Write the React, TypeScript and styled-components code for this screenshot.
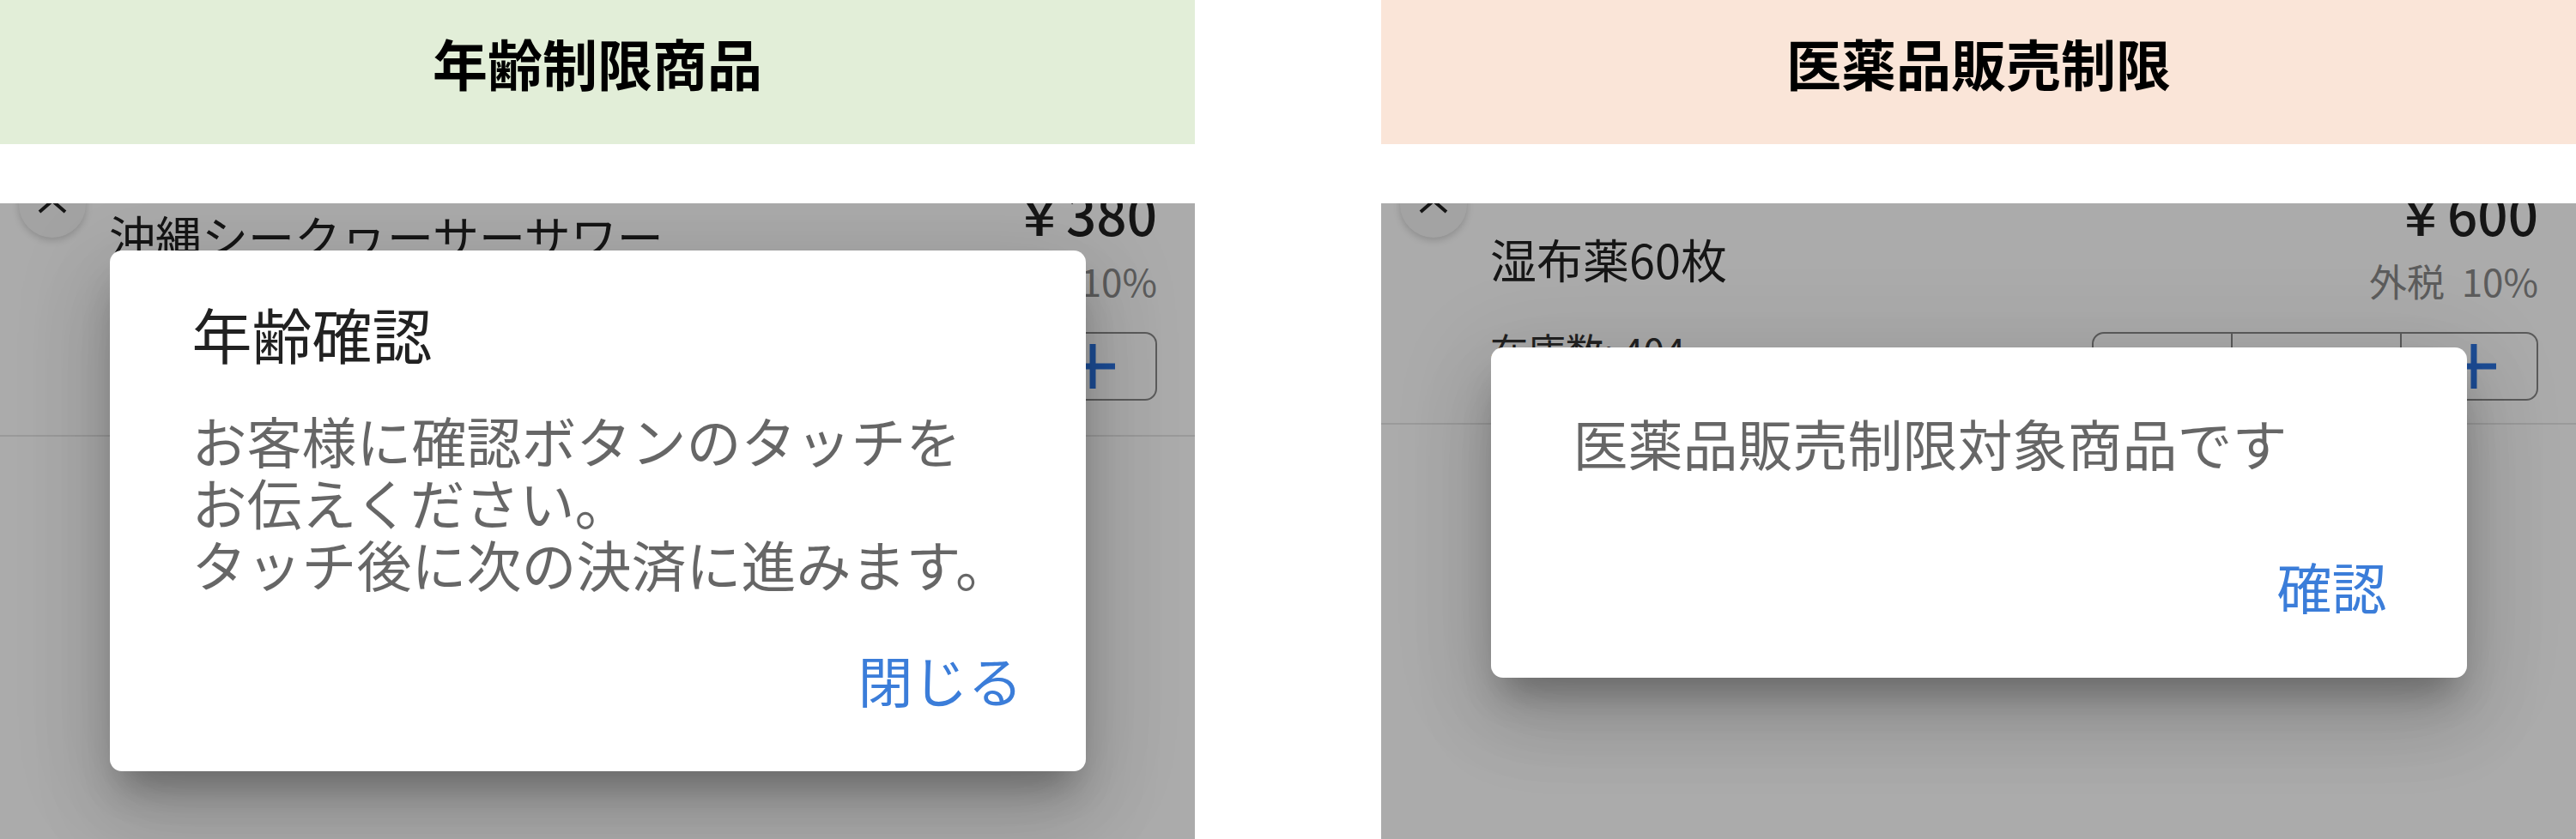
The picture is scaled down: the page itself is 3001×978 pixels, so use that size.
import styled, { createGlobalStyle } from "styled-components";

const GlobalStyle = createGlobalStyle`
  html, body {
    margin: 0;
    padding: 0;
    background: #fff;
  }
  body {
    font-family: "Noto Sans CJK JP", "Noto Sans", sans-serif;
  }
`;

type Case = {
  heading: string;
  tone: string;
  name: string[];
  nameTop: number;
  price: string;
  stock: string;
  dialogTop: number;
  title?: string;
  body: string[];
  bodyTop: number;
  bodyBottom: number;
  action: string;
};

const cases: Case[] = [
  {
    heading: "年齢制限商品",
    tone: "#e2eed8",
    name: ["沖縄シークヮーサーサワー", "350ml"],
    nameTop: 31,
    price: "￥380",
    stock: "在庫数: 120",
    dialogTop: 55,
    title: "年齢確認",
    body: ["お客様に確認ボタンのタッチを", "お伝えください。", "タッチ後に次の決済に進みます。"],
    bodyTop: 45,
    bodyBottom: 63,
    action: "閉じる",
  },
  {
    heading: "医薬品販売制限",
    tone: "#fae5d8",
    name: ["湿布薬60枚"],
    nameTop: 58,
    price: "￥600",
    stock: "在庫数: 404",
    dialogTop: 168,
    body: ["医薬品販売制限対象商品です"],
    bodyTop: 74,
    bodyBottom: 95,
    action: "確認",
  },
];

const App = () => {
  return (
    <>
      <GlobalStyle />
      <Page>
        {cases.map((c) => (
          <Column key={c.heading}>
            <Header $tone={c.tone}>{c.heading}</Header>
            <Screen>
              <List>
                <Row>
                  <Info $top={c.nameTop}>
                    <Name>
                      {c.name.map((line) => (
                        <div key={line}>{line}</div>
                      ))}
                    </Name>
                    <Stock>{c.stock}</Stock>
                  </Info>
                  <Side>
                    <Price>{c.price}</Price>
                    <Tax>外税&nbsp;&nbsp;10%</Tax>
                    <Stepper>
                      <Cell>−</Cell>
                      <Cell>1</Cell>
                      <Cell $shift={10}>
                        <svg width="56" height="56" viewBox="0 0 56 56">
                          <path d="M28 2v52M2 28h52" stroke="#2c74e0" strokeWidth="7" />
                        </svg>
                      </Cell>
                    </Stepper>
                  </Side>
                </Row>
              </List>
              <CollapseButton>
                <svg width="36" height="20" viewBox="0 0 36 20">
                  <path d="M3 17L18 4l15 13" fill="none" stroke="#222" strokeWidth="4" />
                </svg>
              </CollapseButton>
              <Scrim $top={c.dialogTop}>
                <Dialog>
                  {c.title && <Title>{c.title}</Title>}
                  <Body $top={c.bodyTop} $bottom={c.bodyBottom}>
                    {c.body.map((line) => (
                      <div key={line}>{line}</div>
                    ))}
                  </Body>
                  <Actions>
                    <ActionButton>{c.action}</ActionButton>
                  </Actions>
                </Dialog>
              </Scrim>
            </Screen>
          </Column>
        ))}
      </Page>
    </>
  );
};

const Page = styled.div`
  width: 3001px;
  height: 978px;
  display: grid;
  grid-template-columns: 1392px 1392px;
  column-gap: 217px;
  overflow: hidden;
`;

const Column = styled.div`
  display: flex;
  flex-direction: column;
  row-gap: 69px;
  height: 978px;
`;

const Header = styled.div<{ $tone: string }>`
  box-sizing: border-box;
  height: 168px;
  padding-top: 40px;
  background: ${(p) => p.$tone};
  text-align: center;
  font-size: 64px;
  line-height: 64px;
  font-weight: 700;
  color: #000;
`;

const Screen = styled.div`
  position: relative;
  flex: 1;
  overflow: hidden;
  background: #fff;
`;

const List = styled.div`
  margin-top: -40px;
`;

const Row = styled.div`
  display: flex;
  justify-content: space-between;
  padding: 11px 44px 26px 127px;
  border-bottom: 2px solid #e6e6e6;
`;

const Info = styled.div<{ $top: number }>`
  display: flex;
  flex-direction: column;
  row-gap: 42px;
  padding-top: ${(p) => p.$top}px;
`;

const Name = styled.div`
  font-size: 54px;
  line-height: 72px;
  color: #222;
`;

const Stock = styled.div`
  font-size: 44px;
  line-height: 56px;
  color: #333;
`;

const Side = styled.div`
  display: flex;
  flex-direction: column;
  align-items: flex-end;
`;

const Price = styled.div`
  font-size: 62px;
  line-height: 80px;
  font-weight: 500;
  color: #222;
`;

const Tax = styled.div`
  margin-top: 11px;
  font-size: 44px;
  line-height: 56px;
  color: #8a8a8a;
`;

const Stepper = styled.div`
  box-sizing: border-box;
  margin-top: 32px;
  width: 520px;
  height: 80px;
  display: grid;
  grid-template-columns: 160px 197px 1fr;
  border: 2px solid #888;
  border-radius: 14px;
`;

const Cell = styled.div<{ $shift?: number }>`
  display: flex;
  align-items: center;
  justify-content: center;
  padding-left: ${(p) => p.$shift ?? 0}px;
  font-size: 52px;
  color: #333;
  & + & {
    border-left: 2px solid #888;
  }
`;

const CollapseButton = styled.div`
  position: absolute;
  left: 22px;
  top: -38px;
  width: 78px;
  height: 78px;
  border-radius: 50%;
  background: #f4f4f4;
  box-shadow: 0 3px 8px rgba(0, 0, 0, 0.18);
  display: flex;
  align-items: center;
  justify-content: center;
  padding-top: 4px;
  box-sizing: border-box;
`;

const Scrim = styled.div<{ $top: number }>`
  position: absolute;
  inset: 0;
  background: rgba(0, 0, 0, 0.33);
  display: flex;
  justify-content: center;
  align-items: flex-start;
  padding-top: ${(p) => p.$top}px;
`;

const Dialog = styled.div`
  width: 1137px;
  background: #fff;
  border-radius: 14px;
  box-shadow: 0 30px 40px -14px rgba(0, 0, 0, 0.28), 0 50px 90px 6px rgba(0, 0, 0, 0.12),
    0 16px 110px 20px rgba(0, 0, 0, 0.08);
`;

const Title = styled.div`
  padding: 55px 96px 0;
  font-size: 70px;
  line-height: 84px;
  color: rgba(0, 0, 0, 0.87);
`;

const Body = styled.div<{ $top: number; $bottom: number }>`
  padding: ${(p) => p.$top}px 96px ${(p) => p.$bottom}px;
  font-size: 64px;
  line-height: 72px;
  white-space: nowrap;
  color: rgba(0, 0, 0, 0.6);
`;

const Actions = styled.div`
  display: flex;
  justify-content: flex-end;
  padding: 0 45px 72px;
`;

const ActionButton = styled.button`
  min-width: 224px;
  padding: 0 28px;
  border: none;
  background: none;
  font-family: inherit;
  font-size: 64px;
  line-height: 72px;
  color: #3b7dd9;
  text-align: center;
`;

export default App;
